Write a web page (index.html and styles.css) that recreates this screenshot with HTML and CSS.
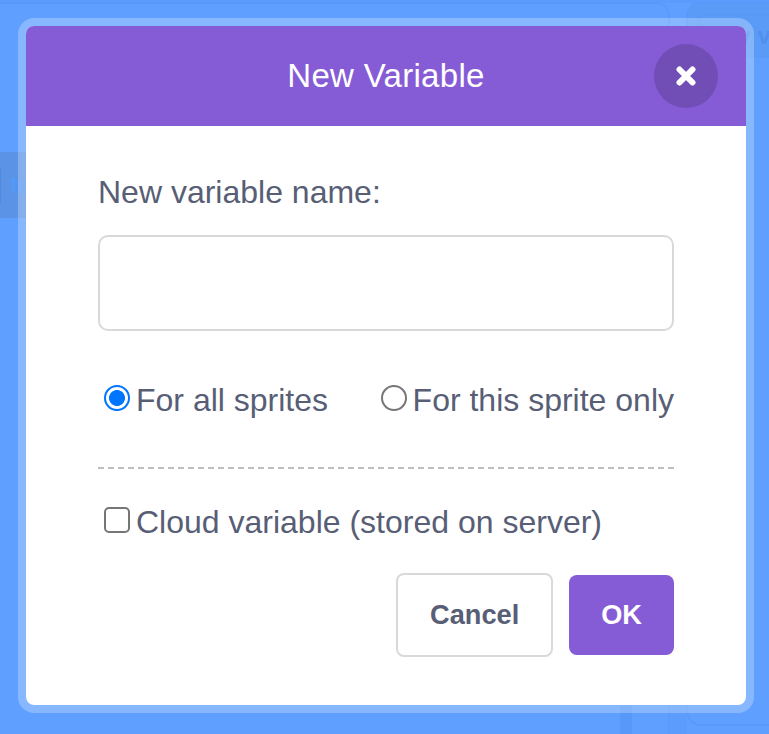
FILE: index.html
```html
<!DOCTYPE html>
<html lang="en">
<head>
<meta charset="utf-8">
<title>New Variable</title>
<link rel="stylesheet" href="styles.css">
</head>
<body>
<svg class="editor" width="769" height="734" aria-hidden="true">
  <path d="M0 0H769V734H0Z" fill="#5e9fff"/>
  <path d="M0 0H769V3H0Z" fill="#5a9cfc"/>
  <path d="M0 3H655Q669 3 669 18V734M769 3H702Q687 3 687 18V708Q687 725 702 725H769" fill="none" stroke="#5799f8" stroke-width="1.5"/>
  <path d="M688 18Q688 4 702 4H769V58H688Z" fill="#5b9bf8"/>
  <path d="M698 30V22Q698 15 706 15H769" fill="none" stroke="#5899f6" stroke-width="2"/>
  <path d="M620 700H632V734H620Z" fill="#5799f9"/>
  <path d="M669 700H687V734H669Z" fill="#5b9cfc"/>
  <path d="M0 152H40V218H0Z" fill="#5b93e6"/>
  <path d="M0 167V203" stroke="#538ade" stroke-width="2"/>
  <text x="11" y="193" class="block-text">to</text>
  <text x="737.5" y="44" class="monitor-text">y v</text>
</svg>
<form class="modal">
  <header class="header">
    <h1 class="title">New Variable</h1>
    <button class="close" type="button" aria-label="Close">
      <svg width="20" height="20" viewBox="0 0 20 20"><path d="M3.5 3.5L16.5 16.5M16.5 3.5L3.5 16.5" stroke="#fff" stroke-width="6" stroke-linecap="round"/></svg>
    </button>
  </header>
  <div class="body">
    <label class="label" for="name">New variable name:</label>
    <input class="name" id="name" type="text">
    <div class="options">
      <label class="option"><input class="radio" type="radio" name="scope" checked>For all sprites</label>
      <label class="option"><input class="radio" type="radio" name="scope">For this sprite only</label>
    </div>
    <svg class="divider" width="576" height="2"><path d="M0 1H576" stroke="#bfbfbf" stroke-width="2" stroke-dasharray="6 4"/></svg>
    <label class="option"><input class="checkbox" type="checkbox">Cloud variable (stored on server)</label>
    <div class="buttons">
      <button class="button cancel" type="button">Cancel</button>
      <button class="button ok" type="button">OK</button>
    </div>
  </div>
</form>
</body>
</html>
```
FILE: styles.css
```css
* { box-sizing: border-box; }
body {
  margin: 0;
  height: 734px;
  overflow: hidden;
  padding: 18px;
  background: #5e9fff;
  color: #575e75;
  font-family: "Liberation Sans", Arial, sans-serif;
  font-size: 32px;
}
.editor { position: absolute; left: 0; top: 0; z-index: -1; }
.block-text { font-size: 23px; fill: #509bff; }
.monitor-text { font-size: 24px; font-weight: bold; fill: #5190ee; }
.modal {
  width: 736px;
  height: 695px;
  border: 8px solid rgba(255, 255, 255, 0.25);
  border-radius: 16px;
  background: #fff;
  background-clip: padding-box;
}
.header {
  display: grid;
  grid-template-columns: 92px 1fr 92px;
  align-items: center;
  height: 100px;
  border-radius: 8px 8px 0 0;
  background: #855cd6;
}
.title {
  grid-column: 2;
  margin: 0;
  color: #fff;
  font-size: 33px;
  font-weight: normal;
  letter-spacing: 0.3px;
  text-align: center;
}
.close {
  display: flex;
  align-items: center;
  justify-content: center;
  width: 64px;
  height: 64px;
  padding: 0;
  border: 0;
  border-radius: 50%;
  background: #714eb6;
}
.body { padding: 48px 72px 0; }
.label { display: block; height: 61px; line-height: 36px; }
.name {
  display: block;
  width: 576px;
  height: 96px;
  border: 2px solid #d9d9d9;
  border-radius: 10px;
  outline: 0;
}
.options { display: flex; justify-content: space-between; margin-top: 51px; }
.option { display: flex; height: 36px; line-height: 36px; white-space: nowrap; }
.radio, .checkbox {
  appearance: none;
  flex: none;
  width: 26px;
  height: 26px;
  margin: 3px 6px 0;
  border: 2px solid #767676;
  border-radius: 50%;
  background: #fff;
}
.checkbox { border-radius: 5px; }
.radio:checked {
  border-color: #0075ff;
  background: radial-gradient(circle, #0075ff 7.6px, #fff 8.3px);
}
.divider { display: block; margin: 49px 0 35px; }
.buttons { display: flex; align-items: center; justify-content: flex-end; gap: 16px; margin-top: 33px; }
.button {
  height: 80px;
  padding: 0 32px;
  border: 0;
  border-radius: 8px;
  font: bold 27.2px "Liberation Sans", Arial, sans-serif;
}
.cancel { height: 84px; border: 2px solid #d9d9d9; background: #fff; color: #575e75; }
.ok { background: #855cd6; color: #fff; }
```
